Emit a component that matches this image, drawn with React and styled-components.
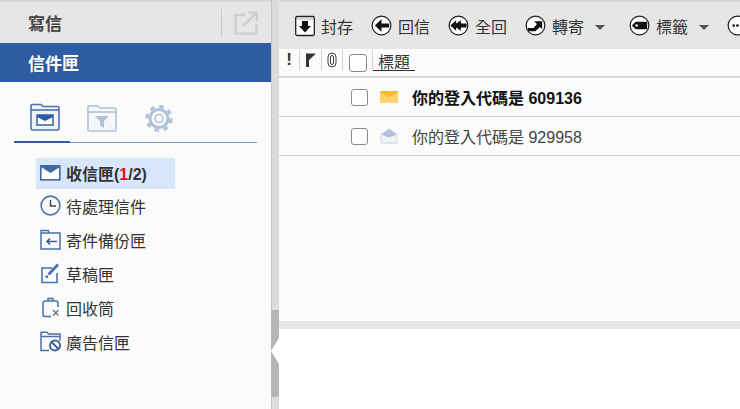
import React from 'react';
import styled, { createGlobalStyle } from 'styled-components';

const Global = createGlobalStyle`
  html, body { margin: 0; padding: 0; }
  body { font-family: "Liberation Sans", "Noto Sans CJK TC", sans-serif; background: #fff; }
`;

const Page = styled.div`
  width: 740px;
  height: 409px;
  overflow: hidden;
  display: flex;
`;

const Sidebar = styled.div`
  width: 271px;
  flex: none;
  background: #fbfbfb;
  border-top: 2px solid #d6d6d6;
  box-sizing: border-box;
`;

const ComposeBar = styled.div`
  height: 41px;
  background: #e6e6e6;
  display: flex;
  align-items: center;
  justify-content: space-between;
  padding: 0 13px 0 28px;
  font-size: 17px;
  font-weight: 700;
  color: #444;
`;

const ComposeRight = styled.div`
  display: flex;
  align-items: center;
  gap: 12px;
`;

const VLine = styled.div`
  width: 1px;
  height: 27px;
  background: #c8c8c8;
`;

const FolderBar = styled.div`
  height: 39px;
  background: #2f5ba3;
  color: #fff;
  font-size: 17px;
  font-weight: 700;
  display: flex;
  align-items: center;
  padding-left: 28px;
`;

const Tabs = styled.div`
  margin: 21px 14px 0 14px;
  height: 39px;
  border-bottom: 1px solid #7f98c4;
  display: flex;
  gap: 27px;
  padding-left: 16px;
  position: relative;
  &::after {
    content: "";
    position: absolute;
    left: 0;
    bottom: -1px;
    width: 56px;
    height: 2px;
    background: #2f5ba3;
  }
`;

const TabIcon = styled.svg`
  width: 30px;
  height: 29px;
  opacity: ${p => (p.$dim ? 0.42 : 1)};
`;

const FolderList = styled.ul`
  list-style: none;
  margin: 15px 0 0 36px;
  padding: 0;
  width: 139px;
`;

const FolderItem = styled.li`
  height: 31px;
  box-sizing: border-box;
  margin-bottom: ${p => (p.$active ? 1 : 3)}px;
  padding-bottom: ${p => (p.$active ? 2 : 0)}px;
  display: flex;
  align-items: center;
  gap: 5px;
  padding-left: 4px;
  font-size: 16px;
  color: #333;
  font-weight: ${p => (p.$active ? 700 : 400)};
  background: ${p => (p.$active ? '#d9e6fa' : 'transparent')};
  white-space: nowrap;
`;

const FolderGlyph = styled.svg`
  width: 21px;
  height: 21px;
  flex: none;
`;

const Unread = styled.span`
  color: #e01010;
`;

const Splitter = styled.div`
  width: 8px;
  flex: none;
  background: #dcdcdc;
  border-left: 1px solid #c4c4c4;
  box-sizing: border-box;
  position: relative;
`;

const Grip = styled.div`
  position: absolute;
  left: -1px;
  right: 0;
  top: 310px;
  height: 87px;
  background: #b5b5b5;
  &::after {
    content: "";
    position: absolute;
    top: 28px;
    left: 0;
    border-top: 13px solid transparent;
    border-bottom: 13px solid transparent;
    border-right: 8px solid #fff;
  }
`;

const Main = styled.div`
  flex: 1;
  min-width: 0;
  display: flex;
  flex-direction: column;
  border-top: 2px solid #d6d6d6;
`;

const Toolbar = styled.div`
  height: 47px;
  flex: none;
  background: #e6e6e6;
  display: flex;
  align-items: center;
  padding-left: 16px;
  white-space: nowrap;
`;

const ToolButton = styled.div`
  display: flex;
  align-items: center;
  gap: 6px;
  font-size: 16px;
  color: #333;
  margin-right: 18px;
`;

const Caret = styled.span`
  width: 0;
  height: 0;
  border-left: 5px solid transparent;
  border-right: 5px solid transparent;
  border-top: 5px solid #555;
  margin-left: 5px;
  margin-top: 3px;
`;

const ToolDivider = styled.div`
  width: 2px;
  height: 20px;
  background: #b4b4b4;
  margin: 0 11px 0 -5px;
`;

const ListHead = styled.div`
  height: 29px;
  flex: none;
  background: #fbfbfb;
  display: flex;
  align-items: flex-start;
  padding-top: 1px;
  border-bottom: 2px solid #d8d8d8;
  box-sizing: border-box;
`;

const HeadCell = styled.div`
  width: ${p => p.$w}px;
  height: 20px;
  border-right: 1px solid #d0d0d0;
  display: flex;
  align-items: center;
  justify-content: center;
  font-size: 17px;
  font-weight: 700;
  color: #333;
  box-sizing: border-box;
`;

const Check = styled.span`
  width: ${p => (p.$big ? 18 : 17)}px;
  height: ${p => (p.$big ? 18 : 17)}px;
  margin-top: ${p => (p.$big ? 6 : 0)}px;
  box-sizing: border-box;
  border: 1.5px solid #8a8a8a;
  border-radius: 3px;
  background: #fff;
  flex: none;
  display: block;
`;

const TitleHead = styled.span`
  font-size: 16px;
  line-height: 14px;
  margin-top: 6px;
  color: #333;
  border-bottom: 1px solid #333;
  padding: 0 5px;
`;

const Row = styled.div`
  height: 39px;
  box-sizing: border-box;
  flex: none;
  display: flex;
  align-items: center;
  background: #fbfbfb;
  border-bottom: 1px solid #d4d4d4;
  padding-left: 72px;
  font-size: 16px;
  color: ${p => (p.$unread ? '#111' : '#444')};
  font-weight: ${p => (p.$unread ? 700 : 400)};
`;

const RowIcon = styled.svg`
  width: 18px;
  height: 16px;
  margin: 0 14px 0 12px;
  flex: none;
`;

const Blank = styled.div`
  flex: 1;
  background: #fbfbfb;
`;

const PreviewBar = styled.div`
  height: 8px;
  flex: none;
  background: #e6e6e6;
`;

const Preview = styled.div`
  height: 80px;
  flex: none;
  background: #fff;
`;

const Circle = ({ children }) => (
  <svg width="21" height="21" viewBox="0 0 22 22">
    <circle cx="11" cy="11" r="9.8" fill="#fff" stroke="#222" strokeWidth="1.3" />
    {children}
  </svg>
);

const Blue = '#4a72ad';

const folderIcons = {
  inbox: (
    <FolderGlyph viewBox="0 0 21 21">
      <rect x="0.8" y="3.8" width="19" height="14" fill="#fff" stroke="#3f68a6" strokeWidth="1.6" />
      <path d="M1 3.5 H20 V5 L10.5 11 L1 5 Z" fill="#3f68a6" />
    </FolderGlyph>
  ),
  clock: (
    <FolderGlyph viewBox="0 0 21 21" fill="none" stroke={Blue} strokeWidth="1.6">
      <circle cx="10.5" cy="10.5" r="9.4" />
      <path d="M10.5 5 V11 H16" stroke="#444" strokeWidth="1.4" />
    </FolderGlyph>
  ),
  sent: (
    <FolderGlyph viewBox="0 0 21 21" fill="none" stroke={Blue} strokeWidth="1.5">
      <path d="M1 4 H20 V20 H1 Z M1 4 V1.5 H8 L9.5 4" />
      <path d="M17 12.5 H7 M10 9.5 L7 12.5 L10 15.5" stroke="#3c5f96" strokeWidth="1.6" />
    </FolderGlyph>
  ),
  draft: (
    <FolderGlyph viewBox="0 0 21 21" fill="none" stroke={Blue} strokeWidth="1.6">
      <path d="M12 5 H2 V19.5 H17 V10" />
      <path d="M8.5 11.5 L18 1.5" strokeWidth="2.8" />
      <rect x="5.5" y="12.5" width="2.6" height="2.6" fill={Blue} stroke="none" />
    </FolderGlyph>
  ),
  trash: (
    <FolderGlyph viewBox="0 0 21 21" fill="none" stroke={Blue} strokeWidth="1.5">
      <path d="M11 19.5 H4.5 Q3 19.5 3 18 V6 Q3 4 5 4 H16 Q18 4 18 6 V10" />
      <path d="M8 4 V1.6 H13 V4" />
      <path d="M13 13 L18.5 18.5 M18.5 13 L13 18.5" stroke="#667" strokeWidth="1.1" />
    </FolderGlyph>
  ),
  spam: (
    <FolderGlyph viewBox="0 0 21 21" fill="none" stroke={Blue} strokeWidth="1.5">
      <path d="M9 19.5 H1 V3 V1.2 H7 L8.5 3 H20 V10 M1 5.5 H20" />
      <circle cx="15" cy="14.5" r="5" fill="#fff" stroke="#3c5f96" strokeWidth="1.9" />
      <path d="M11.5 11 L18.5 18" stroke="#3c5f96" strokeWidth="1.9" />
    </FolderGlyph>
  ),
};

const folders = [
  { key: 'clock', label: '待處理信件' },
  { key: 'sent', label: '寄件備份匣' },
  { key: 'draft', label: '草稿匣' },
  { key: 'trash', label: '回收筒' },
  { key: 'spam', label: '廣告信匣' },
];

const FolderTab = ({ children, dim }) => (
  <TabIcon $dim={dim} viewBox="0 0 30 29" fill="none" stroke={Blue} strokeWidth="1.6">
    {children}
  </TabIcon>
);

export default function App() {
  return (
    <Page>
      <Global />
      <Sidebar>
        <ComposeBar>
          寫信
          <ComposeRight>
            <VLine />
            <svg width="24" height="24" viewBox="0 0 24 24" fill="none" stroke="#cfcfcf" strokeWidth="2.6">
              <path d="M11 4 H1.5 V22.5 H22.5 V13" />
              <path d="M9 15 L22 2.5 M14.5 1.5 H23 V10" />
            </svg>
          </ComposeRight>
        </ComposeBar>
        <FolderBar>信件匣</FolderBar>
        <Tabs>
          <FolderTab>
            <path d="M1 5 V3 Q1 1.5 2.5 1.5 H11 L13 3.5 H27.5 Q29 3.5 29 5 V25.5 Q29 27 27.5 27 H2.5 Q1 27 1 25.5 Z" fill="#eef2f9" />
            <path d="M1 7 H29" />
            <rect x="7" y="12" width="16" height="10" fill="#fff" stroke="#3f68a6" />
            <path d="M7 12 H23 V14 L15 18 L7 14 Z" fill="#2f5ba3" stroke="none" />
          </FolderTab>
          <FolderTab dim>
            <path d="M1 6 V4 Q1 3 2.5 3 H11 L13 5 H27.5 Q29 5 29 6.5 V26.5 Q29 28 27.5 28 H2.5 Q1 28 1 26.5 Z" fill="#eef2f9" />
            <path d="M1 9 H29" />
            <path d="M8 13 H22 L17 18 V25 L13 23 V18 Z" fill={Blue} stroke="none" />
          </FolderTab>
          <FolderTab dim>
            <circle cx="15" cy="15.5" r="9" strokeWidth="3" />
            <circle cx="15" cy="15.5" r="12" strokeWidth="3.2" strokeDasharray="4.6 4.8" />
            <circle cx="15" cy="15.5" r="4" />
          </FolderTab>
        </Tabs>
        <FolderList>
          <FolderItem $active>
            {folderIcons.inbox}
            <span>收信匣(<Unread>1</Unread>/2)</span>
          </FolderItem>
          {folders.map(f => (
            <FolderItem key={f.key}>
              {folderIcons[f.key]}
              {f.label}
            </FolderItem>
          ))}
        </FolderList>
      </Sidebar>
      <Splitter>
        <Grip />
      </Splitter>
      <Main>
        <Toolbar>
          <ToolButton>
            <svg width="20" height="22" viewBox="0 0 20 22">
              <rect x="0.7" y="1.5" width="18.6" height="19" rx="1.5" fill="#fff" stroke="#222" strokeWidth="1.3" />
              <path d="M1 4 H19" stroke="#999" strokeWidth="0.8" />
              <path d="M7 6 H13 V11 H16 L10 17.5 L4 11 H7 Z" fill="#111" />
            </svg>
            封存
          </ToolButton>
          <ToolButton>
            <Circle><path d="M4 11 L11 4.5 V9 H19 V13 H11 V17.5 Z" fill="#111" /></Circle>
            回信
          </ToolButton>
          <ToolButton>
            <Circle><path d="M2.5 11 L8.5 5.5 V9 L13.5 5.5 V9 H19.5 V13 H13.5 V16.5 L8.5 13 V16.5 Z" fill="#111" /></Circle>
            全回
          </ToolButton>
          <ToolButton>
            <Circle><path d="M3 13.5 H9 L12.5 9.5 L9.5 6.5 H18 V15 L15.5 12.5 L11 17 H3 Z" fill="#111" /></Circle>
            轉寄
            <Caret />
          </ToolButton>
          <ToolDivider />
          <ToolButton>
            <Circle><path d="M7 7 H19 V15 H7 L3 11 Z" fill="#111" /><circle cx="8" cy="11" r="1.4" fill="#fff" /></Circle>
            標籤
            <Caret />
          </ToolButton>
          <ToolButton>
            <Circle>
              <circle cx="7" cy="11" r="1.4" fill="#111" />
              <circle cx="11" cy="11" r="1.4" fill="#111" />
              <circle cx="15" cy="11" r="1.4" fill="#111" />
            </Circle>
          </ToolButton>
        </Toolbar>
        <ListHead>
          <HeadCell $w={21}>!</HeadCell>
          <HeadCell $w={22}>
            <svg width="11" height="14" viewBox="0 0 11 14"><path d="M1 0.5 H11 L4 7 V14 H1 Z" fill="#333" /></svg>
          </HeadCell>
          <HeadCell $w={21}>
            <svg width="10" height="16" viewBox="0 0 10 16" fill="none" stroke="#444" strokeWidth="1">
              <path d="M6.5 5 V11 A1.5 1.5 0 0 1 3.5 11 V5 A1.5 1.5 0 0 1 6.5 5" />
              <rect x="1" y="1" width="8" height="14" rx="4" />
            </svg>
          </HeadCell>
          <HeadCell $w={30}>
            <Check $big />
          </HeadCell>
          <TitleHead>標題</TitleHead>
        </ListHead>
        <Row $unread>
          <Check />
          <RowIcon viewBox="0 0 18 16">
            <rect y="2" width="18" height="12" fill="#fdd26e" />
            <path d="M0 2 H18 V3 L9 8.5 L0 3 Z" fill="#fbb92f" />
          </RowIcon>
          你的登入代碼是 609136
        </Row>
        <Row>
          <Check />
          <RowIcon viewBox="0 0 18 16">
            <path d="M1 6.5 L9 1 L17 6.5 V15 H1 Z" fill="#f1f2f8" stroke="#ccd2e6" />
            <path d="M1.5 6.5 L9 1 L16.5 6.5 L9 9.5 Z" fill="#b4bddb" />
          </RowIcon>
          你的登入代碼是 929958
        </Row>
        <Blank />
        <PreviewBar />
        <Preview />
      </Main>
    </Page>
  );
}
